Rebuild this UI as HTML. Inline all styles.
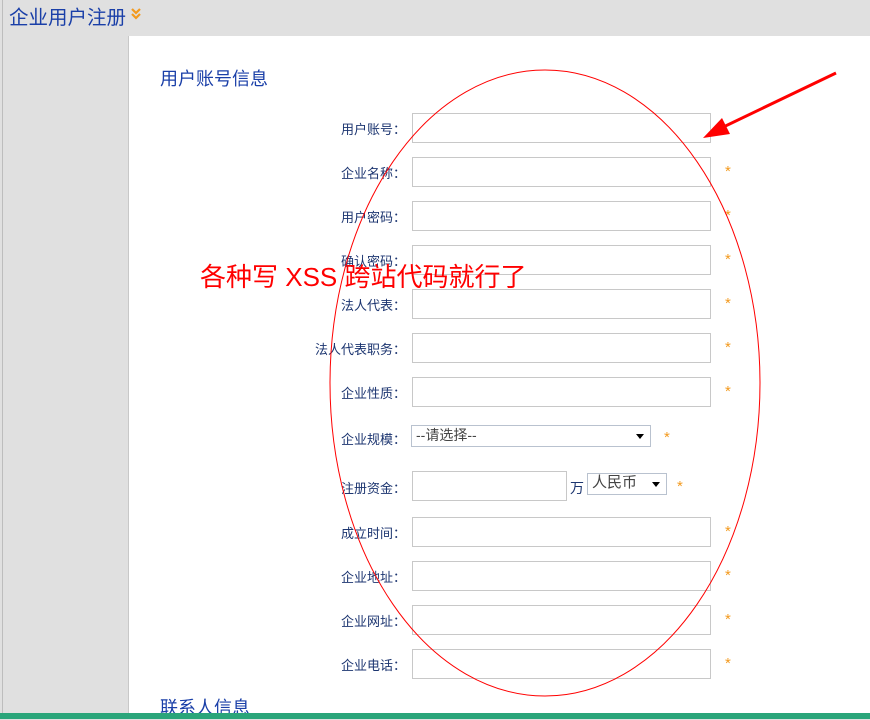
<!DOCTYPE html>
<html><head><meta charset="utf-8"><style>
*{margin:0;padding:0;box-sizing:border-box}
body{width:870px;height:719px;overflow:hidden;background:#e0e0e0;font-family:"Liberation Sans","Noto Sans CJK SC",sans-serif;position:relative}
.vl{position:absolute;left:2px;top:0;width:1px;height:719px;background:#bdbdbd}
.title{position:absolute;left:9px;top:1px;font-size:19.5px;color:#1a3fa8}
.h{position:absolute;left:160px;font-size:18px;color:#1a3fa8}
.panel{position:absolute;left:128px;top:36px;width:742px;height:683px;background:#fff;border-left:1px solid #c8c8c8}
.lb{position:absolute;width:130px;left:276px;text-align:right;font-size:13px;color:#1c3570}
.in{position:absolute;left:412px;width:299px;height:30px;border:1px solid #c8c8c8;background:#fff}
.st{position:absolute;left:725px;color:#f39a1e;font-size:15px}
.sel{position:absolute;border:1px solid #b9c2cf;background:#fff;font-size:14px;color:#444;padding-left:4px;line-height:18px}
.sel i{position:absolute;right:6px;top:8px;border:4px solid transparent;border-top:5px solid #000}
.green{position:absolute;left:0;top:713px;width:870px;height:6px;background:#2aa57a}
</style></head><body>
<div class="vl"></div>
<div class="title">企业用户注册</div>
<svg style="position:absolute;left:130px;top:7px" width="12" height="14"><path d="M2 2 L6 6 L10 2 M2 7 L6 11 L10 7" fill="none" stroke="#f39a1e" stroke-width="2.2"/></svg>
<div class="panel"></div>
<div class="h" style="top:65px">用户账号信息</div>
<div class="lb" style="top:119px">用户账号：</div><div class="in" style="top:113px"></div>
<div class="lb" style="top:163px">企业名称：</div><div class="in" style="top:157px"></div><div class="st" style="top:163px">*</div>
<div class="lb" style="top:207px">用户密码：</div><div class="in" style="top:201px"></div><div class="st" style="top:207px">*</div>
<div class="lb" style="top:251px">确认密码：</div><div class="in" style="top:245px"></div><div class="st" style="top:251px">*</div>
<div class="lb" style="top:295px">法人代表：</div><div class="in" style="top:289px"></div><div class="st" style="top:295px">*</div>
<div class="lb" style="top:339px">法人代表职务：</div><div class="in" style="top:333px"></div><div class="st" style="top:339px">*</div>
<div class="lb" style="top:383px">企业性质：</div><div class="in" style="top:377px"></div><div class="st" style="top:383px">*</div>
<div class="lb" style="top:429px">企业规模：</div>
<div class="sel" style="left:411px;top:425px;width:240px;height:22px">--请选择--<i></i></div><div class="st" style="left:664px;top:429px">*</div>
<div class="lb" style="top:478px">注册资金：</div><div class="in" style="top:471px;width:155px"></div>
<div style="position:absolute;left:570px;top:478px;font-size:14px;color:#1c3570">万</div>
<div class="sel" style="left:587px;top:473px;width:80px;height:22px;font-size:15px">人民币<i></i></div><div class="st" style="left:677px;top:478px">*</div>
<div class="lb" style="top:523px">成立时间：</div><div class="in" style="top:517px"></div><div class="st" style="top:523px">*</div>
<div class="lb" style="top:567px">企业地址：</div><div class="in" style="top:561px"></div><div class="st" style="top:567px">*</div>
<div class="lb" style="top:611px">企业网址：</div><div class="in" style="top:605px"></div><div class="st" style="top:611px">*</div>
<div class="lb" style="top:655px">企业电话：</div><div class="in" style="top:649px"></div><div class="st" style="top:655px">*</div>
<div class="h" style="top:694px">联系人信息</div>
<svg style="position:absolute;left:0;top:0" width="870" height="719">
<ellipse cx="545" cy="383" rx="215" ry="313" fill="none" stroke="#f00" stroke-width="1"/>
<line x1="836" y1="73" x2="715" y2="131" stroke="#f00" stroke-width="3"/>
<polygon points="703,138 722,118 730,134" fill="#f00"/>
<text x="200" y="286" font-size="26" fill="#f00" font-family="Liberation Sans,Noto Sans CJK SC,sans-serif">各种写 XSS 跨站代码就行了</text>
</svg>
<div class="green"></div>
</body></html>
